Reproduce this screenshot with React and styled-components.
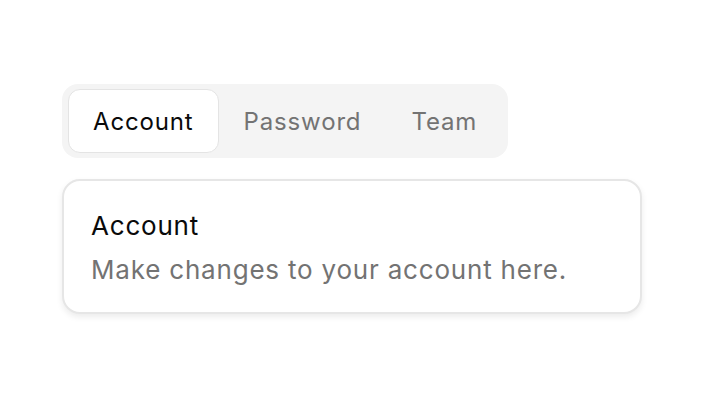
import React, { useState } from 'react';
import styled, { createGlobalStyle } from 'styled-components';

const GlobalStyle = createGlobalStyle`
  body {
    margin: 0;
    background: #ffffff;
    font-family: Inter, "Noto Sans", sans-serif;
  }
`;

const Page = styled.div`
  display: flex;
  flex-direction: column;
  align-items: flex-start;
  gap: 21px;
  padding: 84px 62px;
`;

const TabList = styled.div`
  display: inline-flex;
  align-items: center;
  padding: 5px 6px;
  background: #f4f4f4;
  border-radius: 16px;
`;

const Tab = styled.button`
  height: 64px;
  padding: 0 24px;
  border: 1px solid ${(p) => (p.active ? '#e4e4e4' : 'transparent')};
  border-radius: 12px;
  background: ${(p) => (p.active ? '#ffffff' : 'transparent')};
  color: ${(p) => (p.active ? '#0a0a0a' : '#737373')};
  font-family: Inter, "Noto Sans", sans-serif;
  font-size: 24px;
  font-weight: 400;
  letter-spacing: 0.85px;
  cursor: pointer;
`;

const Card = styled.div`
  width: 580px;
  box-sizing: border-box;
  padding: 28px 27px 25px;
  border: 2px solid #e6e6e6;
  border-radius: 18px;
  background: #fff;
  box-shadow: 0 3px 6px rgba(0, 0, 0, 0.08);
`;

const Title = styled.div`
  font-size: 26px;
  color: #0a0a0a;
  line-height: 34px;
  letter-spacing: 0.8px;
`;

const Description = styled.div`
  margin-top: 10px;
  font-size: 26px;
  color: #737373;
  line-height: 34px;
  letter-spacing: 0.8px;
`;

const tabs = ['Account', 'Password', 'Team'];

const App = () => {
  const [active, setActive] = useState('Account');
  return (
    <>
      <GlobalStyle />
      <Page>
        <TabList>
          {tabs.map((t) => (
            <Tab key={t} active={t === active} onClick={() => setActive(t)}>
              {t}
            </Tab>
          ))}
        </TabList>
        <Card>
          <Title>Account</Title>
          <Description>Make changes to your account here.</Description>
        </Card>
      </Page>
    </>
  );
};

export default App;
